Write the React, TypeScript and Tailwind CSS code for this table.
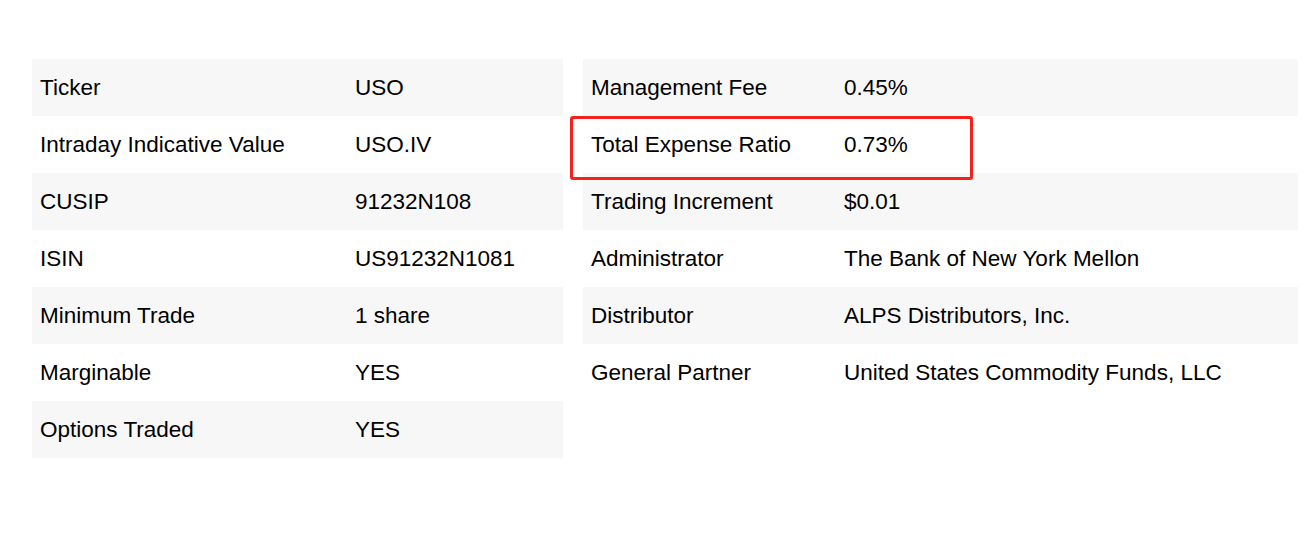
import React from 'react';

const leftRows: [string, string][] = [
  ['Ticker', 'USO'],
  ['Intraday Indicative Value', 'USO.IV'],
  ['CUSIP', '91232N108'],
  ['ISIN', 'US91232N1081'],
  ['Minimum Trade', '1 share'],
  ['Marginable', 'YES'],
  ['Options Traded', 'YES'],
];

const rightRows: [string, string][] = [
  ['Management Fee', '0.45%'],
  ['Total Expense Ratio', '0.73%'],
  ['Trading Increment', '$0.01'],
  ['Administrator', 'The Bank of New York Mellon'],
  ['Distributor', 'ALPS Distributors, Inc.'],
  ['General Partner', 'United States Commodity Funds, LLC'],
];

const InfoTable = ({ rows, labelWidth }: { rows: [string, string][]; labelWidth: string }) => (
  <div className="flex flex-col">
    {rows.map(([label, value], i) => (
      <div
        key={label}
        className={`flex h-[57px] items-center pt-[2px] ${i % 2 === 0 ? 'bg-[#f7f7f7]' : 'bg-white'}`}
      >
        <div className={`${labelWidth} shrink-0 pl-2`}>{label}</div>
        <div className="pl-2">{value}</div>
      </div>
    ))}
  </div>
);

export default function App() {
  return (
    <div
      className="min-h-[543px] w-[1306px] bg-white pl-8 pt-[59px] text-[22.5px] leading-none text-black"
      style={{ fontFamily: '"Liberation Sans", Arial, sans-serif' }}
    >
      <div className="flex gap-5">
        <div className="w-[531px]">
          <InfoTable rows={leftRows} labelWidth="w-[315px]" />
        </div>
        <div className="relative w-[715px]">
          <InfoTable rows={rightRows} labelWidth="w-[253px]" />
          {/* highlight box */}
          <div className="pointer-events-none absolute left-[-13px] top-[57px] h-[64px] w-[403px] rounded-[3px] border-[3px] border-[#f5211b]" />
        </div>
      </div>
    </div>
  );
}
